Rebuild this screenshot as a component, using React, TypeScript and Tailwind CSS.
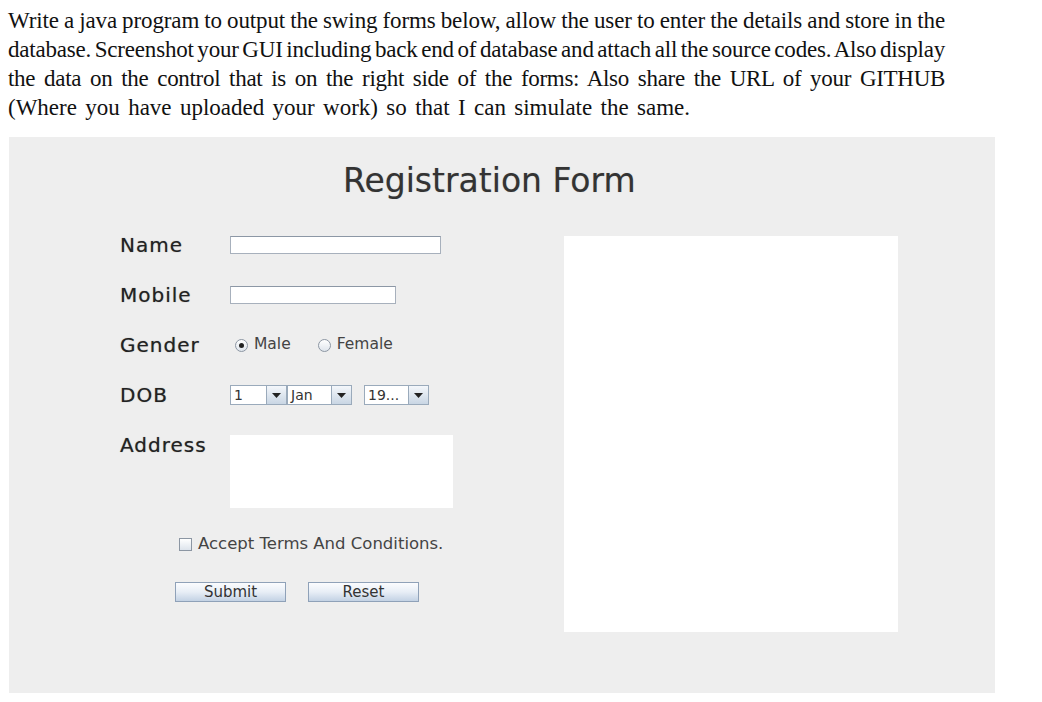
import React from "react";

function Combo({ w, text }: { w: number; text: string }) {
  return (
    <div
      className="flex h-[20px] border border-[#9aaabb] bg-white"
      style={{ width: w }}
    >
      <div className="flex-1 px-[3px] text-[14px] leading-[18px] text-[#333] overflow-hidden whitespace-nowrap">
        {text}
      </div>
      <div className="w-[20px] h-full flex items-center justify-center border-l border-[#9aaabb] bg-gradient-to-b from-[#f4f7fb] to-[#c9d6e4]">
        <svg width="9" height="5" viewBox="0 0 9 5">
          <path d="M0 0 L9 0 L4.5 5 Z" fill="#222" />
        </svg>
      </div>
    </div>
  );
}

function Radio({ checked }: { checked?: boolean }) {
  return (
    <div className="w-[13px] h-[13px] rounded-full border border-[#8c96a3] bg-gradient-to-b from-white to-[#dfe5ec] flex items-center justify-center">
      {checked && <div className="w-[5px] h-[5px] rounded-full bg-[#222]" />}
    </div>
  );
}

function Button({ label }: { label: string }) {
  return (
    <div className="w-[111px] h-[20px] border border-[#8fa1b8] bg-gradient-to-b from-[#fbfcfe] via-[#e8eef6] to-[#c3d2e4] flex items-center justify-center text-[15px] text-[#333] leading-none">
      {label}
    </div>
  );
}

const labelCls =
  "text-[20px] tracking-[1px] text-[#222] [text-shadow:0_0_1px_rgba(0,0,0,0.45)]";

export default function App() {
  const sans = { fontFamily: '"DejaVu Sans", Verdana, sans-serif' };
  return (
    <div className="w-[1042px] h-[702px] bg-white overflow-hidden">
      <div
        className="pl-[8px] pt-[6px] w-[945px] text-[23px] leading-[29px] text-[#111]"
        style={{ fontFamily: '"Liberation Serif", "Times New Roman", serif' }}
      >
        <div className="whitespace-nowrap text-justify [text-align-last:justify] tracking-[-0.12px] [word-spacing:-1.2px]">
          Write a java program to output the swing forms below, allow the user to enter the details and store in the
        </div>
        <div className="whitespace-nowrap text-justify [text-align-last:justify] tracking-[-0.2px] [word-spacing:-2.2px]">
          database. Screenshot your GUI including back end of database and attach all the source codes. Also display
        </div>
        <div className="whitespace-nowrap text-justify [text-align-last:justify] tracking-[-0.3px]">
          the data on the control that is on the right side of the forms: Also share the URL of your GITHUB
        </div>
        <div className="whitespace-nowrap [word-spacing:2.6px]">
          (Where you have uploaded your work) so that I can simulate the same.
        </div>
      </div>

      <div
        className="ml-[9px] mt-[15px] w-[986px] h-[556px] bg-[#eeeeee] flex flex-col"
        style={sans}
      >
        <div className="h-[83px] pl-[334px] pt-[25px]">
          <div className="text-[33px] leading-[38px] text-[#333] [text-shadow:0_0_1px_rgba(0,0,0,0.25)]">
            Registration Form
          </div>
        </div>

        <div className="flex">
          <div className="ml-[111px] w-[444px] flex flex-col">
            <div className="h-[50px] flex items-center">
              <div className={"w-[110px] " + labelCls}>Name</div>
              <div className="w-[211px] h-[18px] bg-white border border-[#a7b0bc] border-t-[#8c97a5]" />
            </div>
            <div className="h-[50px] flex items-center">
              <div className={"w-[110px] " + labelCls}>Mobile</div>
              <div className="w-[166px] h-[18px] bg-white border border-[#a7b0bc] border-t-[#8c97a5]" />
            </div>
            <div className="h-[50px] flex items-center">
              <div className={"w-[115px] " + labelCls}>Gender</div>
              <div className="flex items-center gap-[6px]">
                <Radio checked />
                <span className="text-[15.5px] text-[#444]">Male</span>
              </div>
              <div className="flex items-center gap-[6px] ml-[27px]">
                <Radio />
                <span className="text-[15.5px] text-[#444]">Female</span>
              </div>
            </div>
            <div className="h-[50px] flex items-center">
              <div className={"w-[110px] " + labelCls}>DOB</div>
              <Combo w={57} text="1" />
              <Combo w={65} text="Jan" />
              <div className="ml-[12px]">
                <Combo w={65} text="19..." />
              </div>
            </div>
            <div className="mt-[15px] flex items-start">
              <div className={"w-[110px] leading-[20px] " + labelCls}>Address</div>
              <div className="w-[223px] h-[73px] bg-white" />
            </div>
            <div className="mt-[27px] h-[18px] flex items-center pl-[59px]">
              <div className="w-[13px] h-[13px] border border-[#8c96a3] bg-gradient-to-b from-white to-[#dde4ec]" />
              <span className="ml-[6px] text-[16.5px] text-[#444]">Accept Terms And Conditions.</span>
            </div>
            <div className="mt-[29px] flex pl-[55px] gap-[22px]">
              <Button label="Submit" />
              <Button label="Reset" />
            </div>
          </div>
          <div className="mt-[16px] w-[334px] h-[396px] bg-white" />
        </div>
      </div>
    </div>
  );
}
